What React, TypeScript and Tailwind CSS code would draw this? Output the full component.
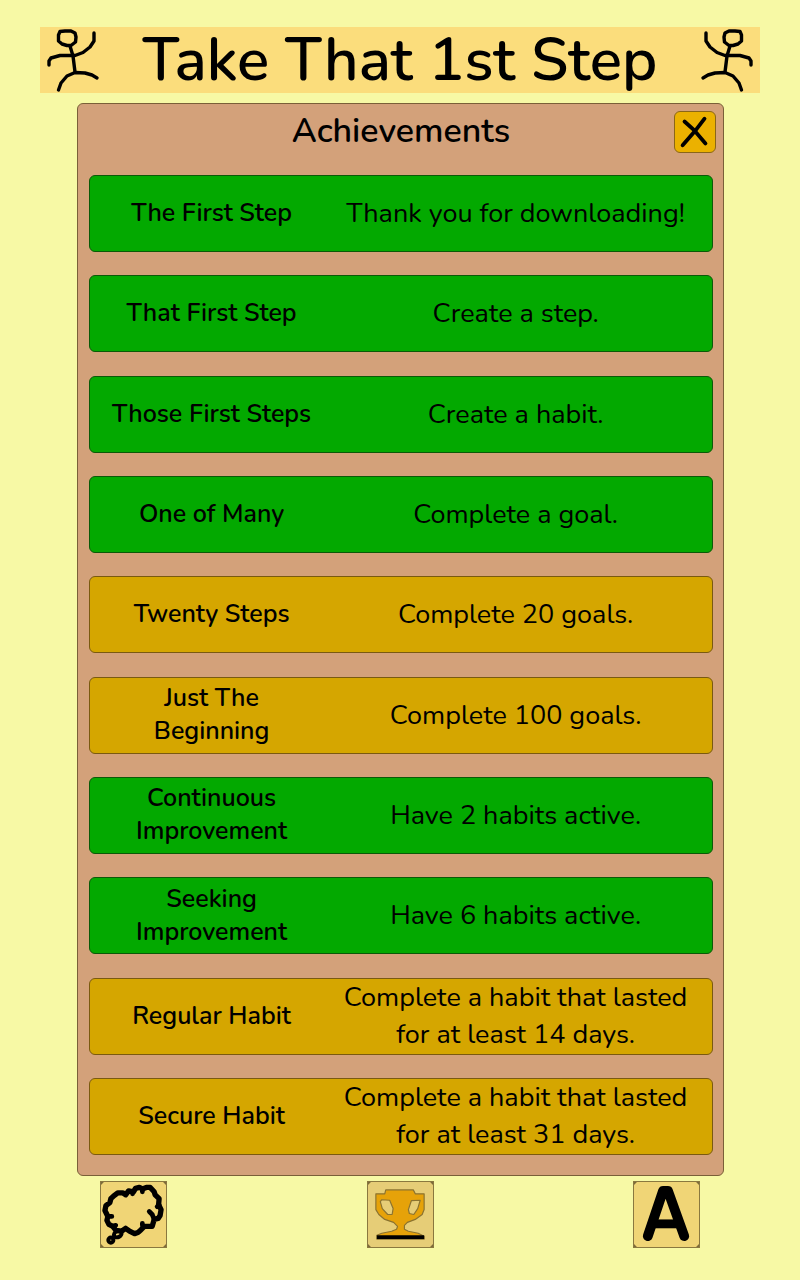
import type { ReactNode } from "react";

type Achievement = { title: string; goal: string; done: boolean };

const achievements: Achievement[] = [
  { title: "The First Step", goal: "Thank you for downloading!", done: true },
  { title: "That First Step", goal: "Create a step.", done: true },
  { title: "Those First Steps", goal: "Create a habit.", done: true },
  { title: "One of Many", goal: "Complete a goal.", done: true },
  { title: "Twenty Steps", goal: "Complete 20 goals.", done: false },
  { title: "Just The Beginning", goal: "Complete 100 goals.", done: false },
  { title: "Continuous Improvement", goal: "Have 2 habits active.", done: true },
  { title: "Seeking Improvement", goal: "Have 6 habits active.", done: true },
  { title: "Regular Habit", goal: "Complete a habit that lasted for at least 14 days.", done: false },
  { title: "Secure Habit", goal: "Complete a habit that lasted for at least 31 days.", done: false },
];

function Dancer({ mirrored = false }: { mirrored?: boolean }) {
  return (
    <svg
      viewBox="0 0 66 66"
      className={mirrored ? "size-[66px] shrink-0 -scale-x-100" : "size-[66px] shrink-0"}
      fill="none"
      stroke="#000"
      strokeWidth="3.4"
      strokeLinecap="round"
      strokeLinejoin="round"
      aria-hidden="true"
    >
      <path d="M20 4.500 L25 4 L31 4 L35 6 L36 10 L35.500 15 L31 18.500 L27 18.500 L22 17 L18.500 14 L18.500 8 Z" />
      <path d="M30 19 L33 29 L35 45" />
      <path d="M9 38 V34 L11 31 L20 28.500 L35 28.500 L43 25.500 L50 20 L54 14 V6" />
      <path d="M18.500 63 L21 56 L27 49 L35 45.500 L45 46 L52 48 L57 51" />
    </svg>
  );
}

function IconCorners() {
  return <path fill="#7d6b3a" stroke="none" d="M0 0 H3 L0 3 Z M66 0 V3 L63 0 Z M0 66 V63 L3 66 Z M66 66 H63 L66 63 Z" />;
}

function ThoughtIcon() {
  return (
    <svg viewBox="0 0 66 66" className="size-full" fill="none" stroke="#000" strokeLinecap="round" strokeLinejoin="round" aria-hidden="true">
      <IconCorners />
      <path
        strokeWidth="5.400"
        d="M7 35 L4 29 L5 24 L9 21 L10 17 L13 14 L17 11 L22 11 L25 13 L28 9 L33 10 L35 6.500 L39 5.500 L42 7 L46 5.500 L50 5.500 L54 10 L55 13 L59 17 L58.500 23 L61 28 L60 34 L58 37 L54 38 L52 45 L44 45 L40 49 L38 51 L34 52.500 L29 50 L25 47 L21 50 L15 49 L12 45 L8 43 L6 39 Z"
      />
      <path strokeWidth="4.800" d="M49 30 L52 33 L54 38 M32 10 V12 M42 7 V10 M59 23 L57 25 M7 35 H11 M12 45 L15 44 M42 44 V42" />
      <ellipse cx="17" cy="53" rx="4" ry="3" strokeWidth="4" transform="rotate(-25 17 53)" />
      <circle cx="10" cy="59" r="2.600" strokeWidth="4" />
    </svg>
  );
}

function TrophyIcon() {
  return (
    <svg viewBox="0 0 66 66" className="size-full" aria-hidden="true">
      <IconCorners />
      <path
        fill="#e6a209"
        stroke="#8b7330"
        strokeWidth="1.2"
        strokeLinejoin="round"
        fillRule="evenodd"
        d="M18 8 L46 8 L48 12 L57 12 L57 28 L55 33 L48 38 L40 41 L37 44 L37 48 L41 50 L51 52 L57 55 L57 58 L9 58 L9 54 L14 52 L24 50 L29 48 L30 45 L26 41 L17 38 L11 33 L8 28 L8 12 L17 12 Z M14 18 L22 18.500 L25.500 27 L24.500 33 L20 33 L14.500 27 L12.500 20 Z M44 19 L53 18.500 L50.500 27 L46.500 33 L42 32 L41 28 Z"
      />
      <path fill="#000" d="M9 54 H57 V58 H9 Z" />
    </svg>
  );
}

function LetterIcon() {
  return (
    <svg viewBox="0 0 66 66" className="size-full" fill="none" stroke="#000" strokeLinecap="round" strokeLinejoin="round" aria-hidden="true">
      <IconCorners />
      <path d="M14 55 L29.500 9 H34.500 L51 55" strokeWidth="10" />
      <path d="M21 42.500 H44" strokeWidth="9" strokeLinecap="butt" />
    </svg>
  );
}

function NavButton({ label, active = false, children }: { label: string; active?: boolean; children: ReactNode }) {
  return (
    <button
      type="button"
      aria-label={label}
      className={
        active
          ? "size-[67px] border border-[#8a783f] bg-[#e6cd77]"
          : "size-[67px] border border-[#8a783f] bg-[#f0d576]"
      }
    >
      {children}
    </button>
  );
}

export default function App() {
  return (
    <div className="flex min-h-screen flex-col bg-[#f7f9a5] px-10 pt-[27px] pb-8 font-['Nunito','Lato',sans-serif] text-black">
      <header className="flex items-center justify-between bg-[#fbdd7c]">
        <Dancer />
        <h1 className="text-[60px] leading-[66px] font-semibold">Take That 1st Step</h1>
        <Dancer mirrored />
      </header>

      <main className="mr-[36px] ml-[37px] mt-[10px] flex flex-1 flex-col rounded-md border border-[#7a6038] bg-[#d3a17a] pr-[10px] pb-5 pl-[11px]">
        <div className="grid grid-cols-[42px_1fr_42px] items-start pt-[7px]">
          <h2 className="col-start-2 text-center text-[34px] leading-10 font-semibold">Achievements</h2>
          <button
            type="button"
            aria-label="Close"
            className="-mr-[3px] size-[42px] justify-self-end rounded-md border border-[#8a6618] bg-[#ebb100]"
          >
            <svg viewBox="0 0 42 42" className="size-full" fill="none" stroke="#000" strokeWidth="4" strokeLinecap="round" aria-hidden="true">
              <path d="M10 10 L20 19 L32 33" />
              <path d="M31 7 L21 20 L8 35" />
            </svg>
          </button>
        </div>

        <ul className="mt-[22px] flex flex-1 flex-col justify-between gap-3">
          {achievements.map((a) => (
            <li
              key={a.title}
              className={
                a.done
                  ? "grid min-h-[77px] grid-cols-[2fr_3fr] items-center rounded-md border border-[#0b5a08] bg-[#03a900] pr-[14px] text-center"
                  : "grid min-h-[77px] grid-cols-[2fr_3fr] items-center rounded-md border border-[#7a5a10] bg-[#d5a600] pr-[14px] text-center"
              }
            >
              <h3 className="px-4 text-[25px] leading-[33px] font-semibold">{a.title}</h3>
              <p className="px-2 text-[27px] leading-[37px]">{a.goal}</p>
            </li>
          ))}
        </ul>
      </main>

      <nav className="mx-[60px] mt-[5px] flex justify-between">
        <NavButton label="Thoughts">
          <ThoughtIcon />
        </NavButton>
        <NavButton label="Achievements" active>
          <TrophyIcon />
        </NavButton>
        <NavButton label="Text">
          <LetterIcon />
        </NavButton>
      </nav>
    </div>
  );
}
